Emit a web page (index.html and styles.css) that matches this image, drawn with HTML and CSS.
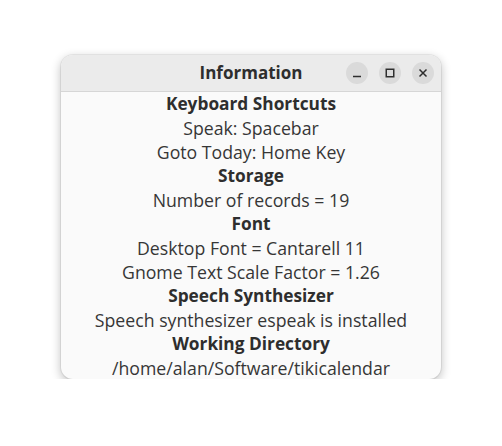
FILE: index.html
```html
<!DOCTYPE html>
<html>
<head>
<meta charset="utf-8">
<link rel="stylesheet" href="styles.css">
</head>
<body>
<div class="window">
  <div class="header">
    <div class="title">Information</div>
    <div class="controls">
      <div class="btn">
        <svg width="12" height="12" viewBox="0 0 12 12"><path d="M2 9.5h8" stroke="#2e2e2e" stroke-width="1.5" fill="none"/></svg>
      </div>
      <div class="btn">
        <svg width="12" height="12" viewBox="0 0 12 12"><rect x="2.25" y="2.25" width="7.5" height="7.5" stroke="#2e2e2e" stroke-width="1.5" fill="none"/></svg>
      </div>
      <div class="btn">
        <svg width="12" height="12" viewBox="0 0 12 12"><path d="M2.5 2.5l7 7M9.5 2.5l-7 7" stroke="#2e2e2e" stroke-width="1.5" fill="none"/></svg>
      </div>
    </div>
  </div>
  <div class="content">
    <div class="line bold">Keyboard Shortcuts</div>
    <div class="line">Speak: Spacebar</div>
    <div class="line">Goto Today: Home Key</div>
    <div class="line bold">Storage</div>
    <div class="line">Number of records = 19</div>
    <div class="line bold">Font</div>
    <div class="line">Desktop Font = Cantarell 11</div>
    <div class="line">Gnome Text Scale Factor = 1.26</div>
    <div class="line bold">Speech Synthesizer</div>
    <div class="line">Speech synthesizer espeak is installed</div>
    <div class="line bold">Working Directory</div>
    <div class="line">/home/alan/Software/tikicalendar</div>
  </div>
</div>
</body>
</html>
```
FILE: styles.css
```css
html, body {
  margin: 0;
  padding: 0;
  background: #ffffff;
}
body {
  padding: 55px 0 0 61px;
  font-family: "Open Sans", "Noto Sans", sans-serif;
  color: #2e2e2e;
}
.window {
  width: 380px;
  height: 324px;
  border-radius: 12px;
  overflow: hidden;
  background: #fafafa;
  box-shadow: 0 3px 10px 1px rgba(0,0,0,0.22), 0 0 0 1px rgba(0,0,0,0.06);
  display: flex;
  flex-direction: column;
}
.header {
  height: 36px;
  background: #ebebeb;
  border-bottom: 1px solid #d6d6d6;
  position: relative;
  display: flex;
  align-items: center;
  justify-content: center;
  flex-shrink: 0;
}
.title {
  font-weight: 700;
  font-size: 17px;
  color: #2e2e2e;
  margin-top: -2px;
}
.controls {
  position: absolute;
  right: 7px;
  top: 7px;
  display: flex;
  gap: 11px;
}
.btn {
  width: 22px;
  height: 22px;
  border-radius: 50%;
  background: #dadada;
  display: flex;
  align-items: center;
  justify-content: center;
}
.btn svg { display: block; }
.content {
  display: flex;
  flex-direction: column;
  align-items: center;
}
.line {
  height: 24px;
  line-height: 24px;
  font-size: 17.7px;
  white-space: nowrap;
  color: #363636;
}
.bold {
  font-weight: 700;
  font-size: 17.3px;
  color: #2e2e2e;
}
```
